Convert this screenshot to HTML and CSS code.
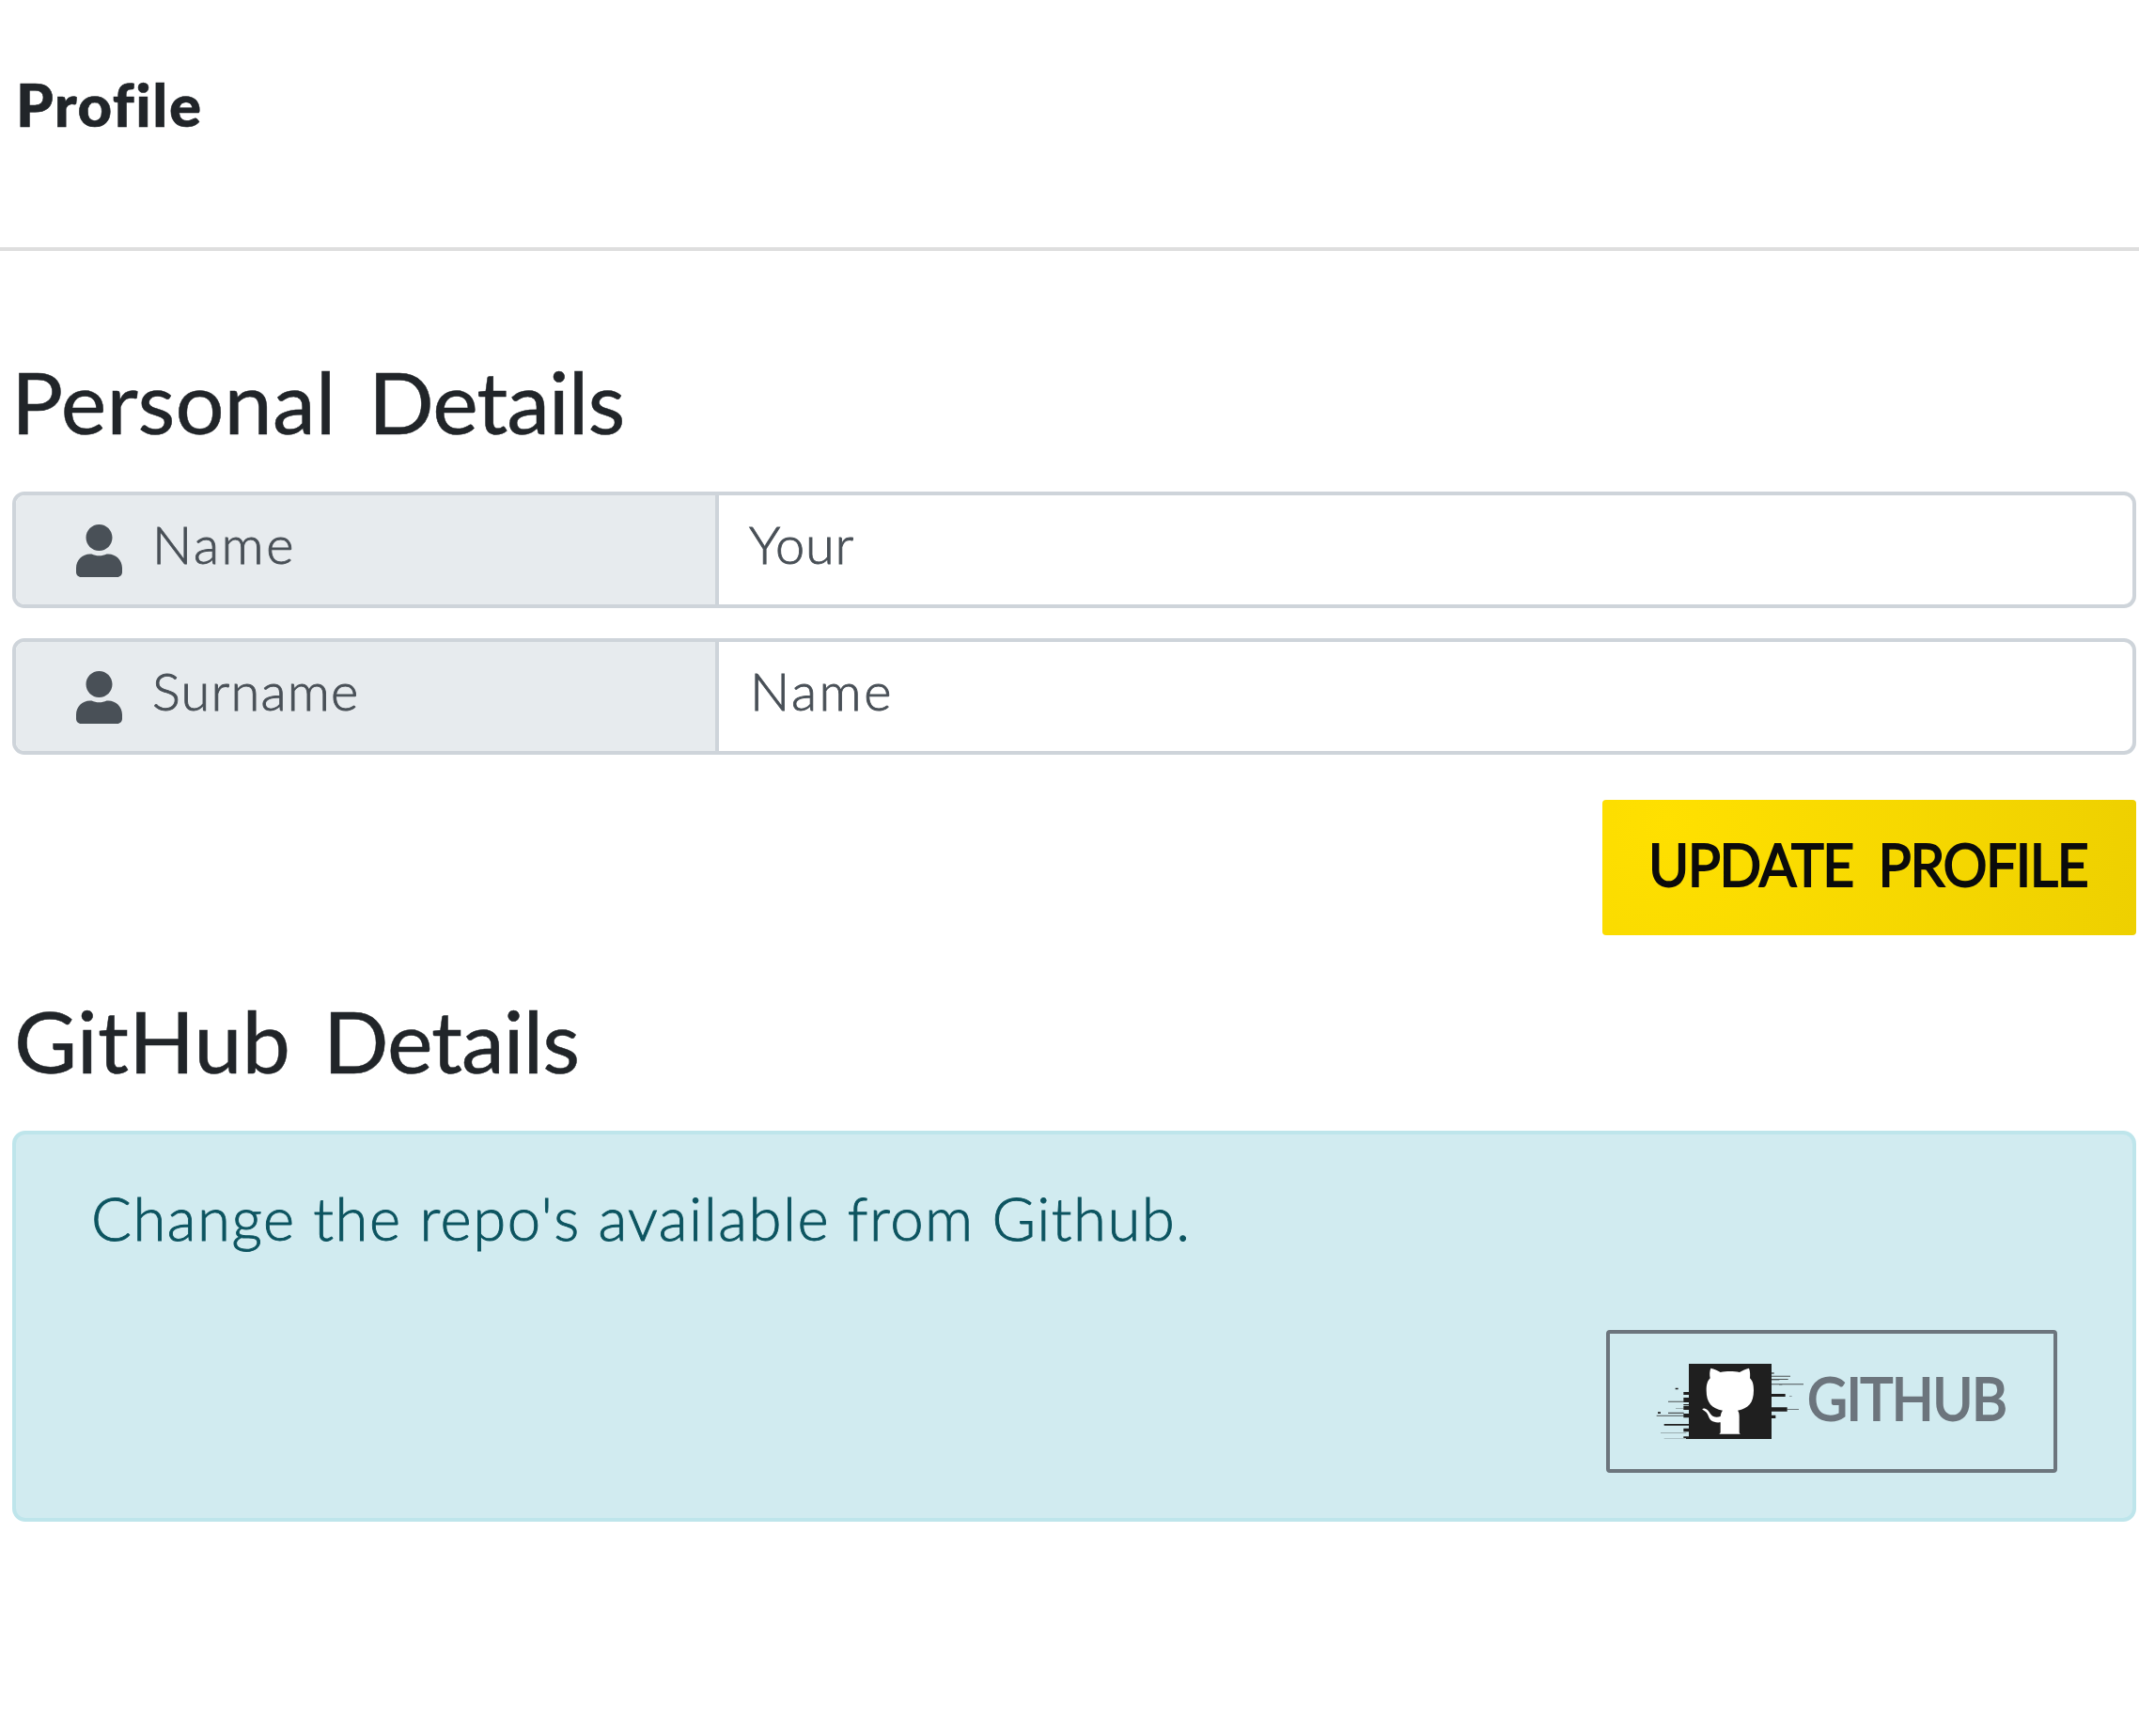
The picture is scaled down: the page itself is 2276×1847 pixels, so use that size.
FILE: index.html
```html
<!DOCTYPE html>
<html lang="en">
<head>
<meta charset="utf-8">
<title>Profile</title>
<link rel="stylesheet" href="styles.css">
</head>
<body>
<svg width="0" height="0" class="sprite" aria-hidden="true">
  <symbol id="user" viewBox="0 0 448 512"><path d="M224 256c70.7 0 128-57.3 128-128S294.7 0 224 0 96 57.3 96 128s57.3 128 128 128zm89.6 32h-16.7c-22.2 10.2-46.9 16-72.9 16s-50.6-5.8-72.9-16h-16.7C60.2 288 0 348.2 0 422.4V464c0 26.5 21.5 48 48 48h352c26.5 0 48-21.5 48-48v-41.6c0-74.2-60.2-134.4-134.4-134.4z"/></symbol>
</svg>
<header class="page-header"><h1 class="page-title">Profile</h1></header>
<main class="content">
  <h2 class="section-title section-personal">Personal <span class="tight">Details</span></h2>
  <form class="form">
    <div class="input-group">
      <div class="addon"><svg class="user-icon"><use href="#user"/></svg><span class="label label-name">Name</span></div>
      <div class="control"><span class="value value-your">Your</span></div>
    </div>
    <div class="input-group">
      <div class="addon"><svg class="user-icon"><use href="#user"/></svg><span class="label label-surname">Surname</span></div>
      <div class="control"><span class="value value-name">Name</span></div>
    </div>
    <button class="btn btn-primary" type="button"><span class="btn-label">UPDATE PROFILE</span></button>
  </form>
  <h2 class="section-title section-github">GitHub <span class="tight">Details</span></h2>
  <section class="alert">
    <p class="alert-text">Change the repo's available from Github.</p>
    <button class="btn btn-outline" type="button">
      <svg class="github-icon" viewBox="36 48 480 240">
        <g fill="#1f1f1f">
          <path d="M141 48h264v240H141z"/>
          <path d="M98 125h9v5h-9zM124 138h18v9h-18zM124 156h18v15h-18zM124 177h18v4h-18zM124 183h18v12h-18zM42 202h9v5h-9zM124 207h18v13h-18zM62 240h80v5H62zM124 254h18v11h-18zM124 280h18v5h-18zM132 285h10v3h-10z"/>
          <path d="M405 144h44v9h-44zM405 187h50v13h-50zM405 212h13v10h-13z"/>
          <path opacity=".75" d="M75 167h50v3H75zM75 203h50v4H75zM38 212h87v3H38zM405 86h60v3h-60zM405 96h53v3h-53zM405 111.500h102v3H405zM455 192h37v2.500h-37zM405 76h8v4h-8z"/>
          <path opacity=".4" d="M99 189h26v2H99zM51 267h82v2.500H51zM62 285.500h71v2H62zM405 99h25v2h-25zM429 114h10v2h-10zM462 150h8v3h-8z"/>
        </g>
        <path fill="#fff" d="M211 62c11 2 22 7 31 13 18-4 43-4 61 0 9-6 20-11 30-13 4 10 4 22 3 32 9 9 12 20 12 39 0 41-17 58-51 64 4 5 5 11 5 19v52l3 4h-67l4-4v-33c-25 2-34-6-39-21-3-9-9-15-17-19-5-3 1-6 7-4 11 4 14 13 19 19 6 8 17 11 30 6 1-8 3-14 7-19-35-6-52-24-52-64 0-18 3-30 12-39-2-10-2-22 2-32z"/>
      </svg>
      <span class="btn-label">GITHUB</span>
    </button>
  </section>
</main>
</body>
</html>
```
FILE: styles.css
```css
* { box-sizing: border-box; }

body {
  margin: 0;
  background: #fff;
  color: #212529;
  font-family: Lato, "Liberation Sans", sans-serif;
}

.sprite { display: block; }

.page-header {
  height: 267px;
  padding: 71px 0 0 17px;
  border-bottom: 4px solid #dedede;
}

.page-title {
  margin: 0;
  font-size: 63.5px;
  line-height: 80px;
  font-weight: 900;
  letter-spacing: 1.5px;
  font-variant-ligatures: none;
  -webkit-text-stroke: 0.6px;
}

.content { padding: 105px 3px 0 13px; }

.section-title {
  margin: 0 0 41px;
  font-size: 92px;
  line-height: 110px;
  font-weight: 400;
  white-space: nowrap;
  word-spacing: 11px;
  -webkit-text-stroke: 0.5px;
}

.section-personal { text-indent: -1px; }
.section-github { text-indent: 2px; }
.tight { letter-spacing: -1.1px; }

.form {
  display: flex;
  flex-direction: column;
  margin-bottom: 57px;
}

.input-group {
  display: flex;
  height: 124px;
  margin-bottom: 32px;
  border: 4px solid #ced4da;
  border-radius: 13px;
  overflow: hidden;
  color: #495057;
  font-size: 56px;
  font-weight: 300;
  -webkit-text-stroke: 0.9px;
}

.addon {
  display: flex;
  align-items: center;
  width: 748px;
  padding-left: 64px;
  background: #e7ebee;
  border-right: 4px solid #ced4da;
}

.user-icon {
  width: 49px;
  height: 56px;
  margin: 2px 32px 0 0;
  fill: currentColor;
  stroke: none;
}

.control {
  display: flex;
  align-items: center;
  flex: 1;
  padding-left: 32px;
}

.label, .value { padding-bottom: 13px; }

.label-name, .value-name { letter-spacing: 2.6px; }
.label-surname { letter-spacing: 1.2px; }
.value-your { letter-spacing: 0.7px; }
.value-name { padding-left: 1px; }

.btn {
  display: flex;
  align-items: center;
  align-self: flex-end;
  padding: 0;
  border-radius: 4px;
  font-family: inherit;
  font-size: 62.5px;
  line-height: 80px;
  font-weight: 400;
  letter-spacing: -1.5px;
  white-space: nowrap;
  -webkit-text-stroke: 1.8px;
}

.btn-primary {
  width: 568px;
  height: 144px;
  margin-top: 16px;
  padding-left: 48px;
  border: 0;
  background: radial-gradient(circle at 12% 15%, #ffe000, #eed000);
  color: #0b0b0b;
  word-spacing: 14px;
}

.alert {
  display: flex;
  flex-direction: column;
  height: 416px;
  padding: 48px 80px;
  border: 4px solid #bee5eb;
  border-radius: 14px;
  background: #d1ebf0;
}

.alert-text {
  margin: 0 0 80px;
  color: #0c5460;
  font-size: 63.5px;
  line-height: 81px;
  height: 80px;
  font-weight: 300;
  letter-spacing: 1.5px;
  -webkit-text-stroke: 0.9px;
}

.btn-outline {
  width: 480px;
  height: 152px;
  padding-left: 49px;
  border: 4px solid #6c757d;
  background: transparent;
  color: #6c757d;
}

.github-icon {
  flex: none;
  width: 160px;
  height: 80px;
}

/* Condensed caps for button captions */
.btn-label {
  padding: 0 0 9px 1px;
  transform: scaleX(0.94);
  transform-origin: left center;
}
```
